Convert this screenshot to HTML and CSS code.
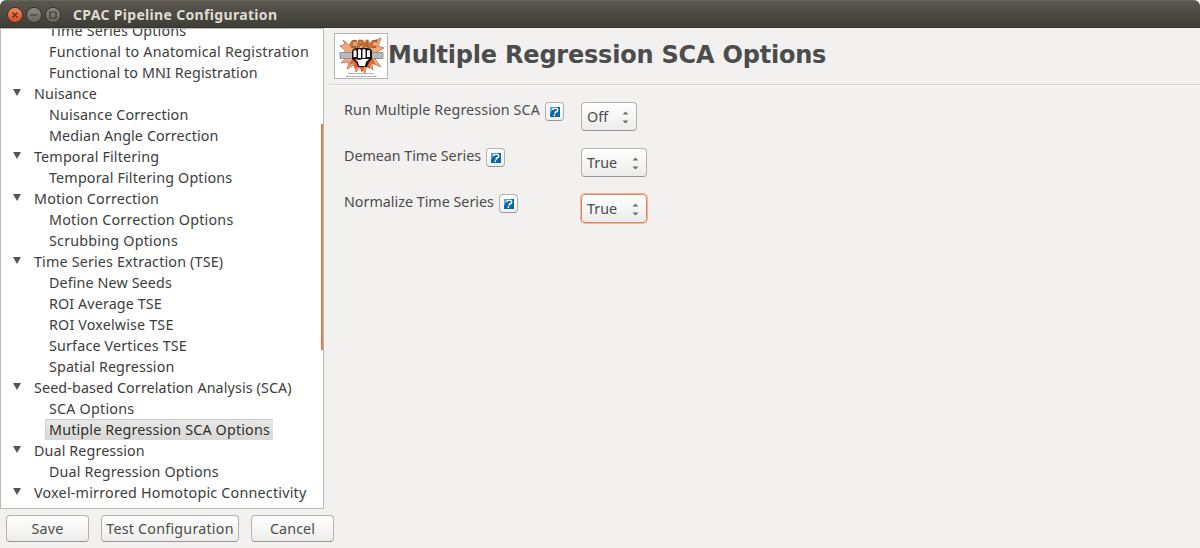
FILE: index.html
```html
<!DOCTYPE html>
<html lang="en">
<head>
<meta charset="utf-8">
<title>CPAC Pipeline Configuration</title>
<link rel="stylesheet" href="styles.css">
</head>
<body>
<div class="window">
  <header class="titlebar">
    <svg class="controls" width="54" height="18" viewBox="0 0 54 18">
      <defs>
        <linearGradient id="close" x2="0" y2="1"><stop stop-color="#f68a62"/><stop offset="1" stop-color="#dd4814"/></linearGradient>
        <linearGradient id="grey" x2="0" y2="1"><stop stop-color="#8b8982"/><stop offset="1" stop-color="#66645d"/></linearGradient>
      </defs>
      <g stroke="#34332e" stroke-width="1">
        <circle cx="8" cy="9" r="7.6" fill="url(#close)"/>
        <circle cx="27" cy="9" r="7.6" fill="url(#grey)"/>
        <circle cx="46" cy="9" r="7.6" fill="url(#grey)"/>
      </g>
      <path d="M5.500 6.500l5 5m0-5l-5 5M23.500 9h7M43 6h6v6h-6z" fill="none" stroke="#393832" stroke-width="1.200"/>
    </svg>
    <h1 class="title">CPAC Pipeline Configuration</h1>
  </header>
  <div class="body">
    <aside class="side">
      <nav class="tree">
        <ul class="list">
          <li class="leaf">Time Series Options</li>
          <li class="leaf wide">Functional to Anatomical Registration</li>
          <li class="leaf narrow">Functional to MNI Registration</li>
          <li class="group narrow">Nuisance</li>
          <li class="leaf">Nuisance Correction</li>
          <li class="leaf narrow">Median Angle Correction</li>
          <li class="group">Temporal Filtering</li>
          <li class="leaf">Temporal Filtering Options</li>
          <li class="group">Motion Correction</li>
          <li class="leaf wide">Motion Correction Options</li>
          <li class="leaf wide">Scrubbing Options</li>
          <li class="group">Time Series Extraction (TSE)</li>
          <li class="leaf narrow">Define New Seeds</li>
          <li class="leaf narrow">ROI Average TSE</li>
          <li class="leaf">ROI Voxelwise TSE</li>
          <li class="leaf">Surface Vertices TSE</li>
          <li class="leaf narrow">Spatial Regression</li>
          <li class="group narrow">Seed-based Correlation Analysis (SCA)</li>
          <li class="leaf wide">SCA Options</li>
          <li class="leaf selected">Mutiple Regression SCA Options</li>
          <li class="group narrow">Dual Regression</li>
          <li class="leaf">Dual Regression Options</li>
          <li class="group wide">Voxel-mirrored Homotopic Connectivity</li>
        </ul>
        <div class="thumb"></div>
      </nav>
      <div class="actions">
        <button class="btn save">Save</button>
        <button class="btn test">Test Configuration</button>
        <button class="btn cancel">Cancel</button>
      </div>
    </aside>
    <main class="page">
      <div class="heading">
        <svg class="logo" width="54" height="46" viewBox="0 0 54 46">
          <rect x=".5" y=".5" width="53" height="45" fill="#fff" stroke="#b4b4bc"/>
          <path d="M9 7l6 5 3-2 20 0 4-3 5-2-3 8 6 2-7 4 4 6-6 1 6 8-9-4 1 7-6-5-2 8-4-7-5 6-2-7-7 4 2-7-8 1 5-5-6-3 6-4-6-5 5-2z" fill="#f3a77c" stroke="#9c5431" stroke-width=".6"/>
          <path d="M19 25l-4 7 5-2 1 6 4-3 3 7 3-7 5 3 1-6 5 2-4-7z" fill="#e2602a"/>
          <path d="M6 19.500h13v6H6zM37 19.500h12v6H37z" fill="#b9b9bd" stroke="#85858a" stroke-width=".8"/>
          <path d="M18 18q1-3 5-3h10q4 0 5 3v8l-3 3-2 5h-9l-2-5-4-3z" fill="#191514"/>
          <path d="M19.500 18q1.500-2 3 0v6h-3zM24 17q1.500-2 3 0v8h-3zM28.500 17q1.500-2 3 0v8h-3zM33 18q1.500-2 3 0v6h-3zM21 26l4 1 4-1 6 0-3 3-1 4h-6l-1-4z" fill="#fff"/>
          <text class="logo-name" x="16" y="15" textLength="27" lengthAdjust="spacingAndGlyphs">CPAC</text>
          <path d="M14 40.500h26M12 43.500h31" stroke="#a3a0a5" stroke-width="1" stroke-dasharray="2 .5 3 .6"/>
        </svg>
        <h2 class="heading-text">Multiple Regression SCA Options</h2>
      </div>
      <div class="options">
        <div class="option">
          <label class="label run">Run Multiple Regression SCA</label>
          <button class="help"><svg width="10" height="10" viewBox="0 0 10 10"><path d="M0 0h10v10H0z" fill="#0868ac"/><path d="M0 0h4L0 7z" fill="#5fa6d4"/><path d="M2.500 3Q3 1.300 5.500 1.300T7.600 3.500Q7.300 4.800 5.600 5L4.900 6.600M4.500 7.400l-.3 1.600" fill="none" stroke="#fff" stroke-width="1.500"/></svg></button>
          <div class="choice off">Off<svg class="arrows" width="7" height="13" viewBox="0 0 7 13"><path d="M.5 3.500L3.500 .5l3 3zM.5 9.500h6l-3 3z" fill="#6c6c6c"/></svg></div>
        </div>
        <div class="option">
          <label class="label demean">Demean Time Series</label>
          <button class="help"><svg width="10" height="10" viewBox="0 0 10 10"><path d="M0 0h10v10H0z" fill="#0868ac"/><path d="M0 0h4L0 7z" fill="#5fa6d4"/><path d="M2.500 3Q3 1.300 5.500 1.300T7.600 3.500Q7.300 4.800 5.600 5L4.900 6.600M4.500 7.400l-.3 1.600" fill="none" stroke="#fff" stroke-width="1.500"/></svg></button>
          <div class="choice">True<svg class="arrows" width="7" height="13" viewBox="0 0 7 13"><path d="M.5 3.500L3.500 .5l3 3zM.5 9.500h6l-3 3z" fill="#6c6c6c"/></svg></div>
        </div>
        <div class="option">
          <label class="label normalize">Normalize Time Series</label>
          <button class="help"><svg width="10" height="10" viewBox="0 0 10 10"><path d="M0 0h10v10H0z" fill="#0868ac"/><path d="M0 0h4L0 7z" fill="#5fa6d4"/><path d="M2.500 3Q3 1.300 5.500 1.300T7.600 3.500Q7.300 4.800 5.600 5L4.900 6.600M4.500 7.400l-.3 1.600" fill="none" stroke="#fff" stroke-width="1.500"/></svg></button>
          <div class="choice focused">True<svg class="arrows" width="7" height="13" viewBox="0 0 7 13"><path d="M.5 3.500L3.500 .5l3 3zM.5 9.500h6l-3 3z" fill="#6c6c6c"/></svg></div>
        </div>
      </div>
    </main>
  </div>
</div>
</body>
</html>
```
FILE: styles.css
```css
* { box-sizing: border-box; }
body { margin: 0; background: #fff; color: #3c3c3c; font: 14.3px/21px "Noto Sans", sans-serif; }
.window { width: 1200px; height: 548px; display: flex; flex-direction: column; background: #f2f1f0; overflow: hidden; border-radius: 6px 6px 0 0; }
.titlebar { height: 28px; flex: none; display: flex; align-items: center; gap: 12px; padding: 1px 7px 0; background: linear-gradient(#5a574f, #3e3d38); border-top: 1px solid #68655c; border-bottom: 1px solid #35342f; }
.title { margin: 0; font-size: 14px; line-height: 20px; font-weight: 700; letter-spacing: .33px; color: #dfdbd2; }
.body { flex: 1; display: flex; min-height: 0; }
.side { width: 324px; flex: none; display: flex; flex-direction: column; }
.tree { height: 481px; flex: none; position: relative; overflow: hidden; background: #fff; border: 1px solid #bbb7b2; }
.list { margin: -9px 0 0; padding: 0; list-style: none; letter-spacing: .17px; }
.leaf { width: max-content; height: 21px; margin-left: 44px; padding: 0 4px; white-space: nowrap; }
.group { display: flex; height: 21px; padding-left: 33px; white-space: nowrap; }
.group::before { content: ""; width: 8px; height: 7px; margin: 6px 13px 0 -21px; background: #555; clip-path: polygon(0 0, 100% 0, 50% 100%); }
.narrow { letter-spacing: .12px; }
.wide { letter-spacing: .22px; }
.selected { width: 228px; background: linear-gradient(#e8e8e7, #d9d8d6); box-shadow: inset 0 1px #cfcfcc, inset 1px 0 #d2d1cf; color: #2f2f2f; }
.thumb { position: absolute; top: 95px; right: -1px; width: 3px; height: 226px; background: #f07746; }
.actions { display: flex; padding: 6px 0 0 6px; }
.btn { flex: none; height: 27px; padding: 0; border: 1px solid #b5b2ae; border-bottom-color: #989592; border-radius: 4px; background: linear-gradient(#fff, #ededec); color: #4c4c4c; font: inherit; white-space: nowrap; }
.save { width: 83px; letter-spacing: .2px; }
.test { width: 138px; margin: 0 12px; letter-spacing: .22px; }
.cancel { width: 83px; letter-spacing: .1px; }
.page { flex: 1; padding-left: 5px; }
.heading { height: 57px; display: flex; padding: 5px 0 0 5px; border-bottom: 1px solid #d5d2cf; box-shadow: 0 1px #fbfbfa; }
.logo { flex: none; }
.logo-name { font: italic 700 11px "DejaVu Sans", sans-serif; fill: #ec7a2c; stroke: #6b3218; stroke-width: .5px; }
.heading-text { margin: 0; font: 700 24px/44px "DejaVu Sans", sans-serif; letter-spacing: -.21px; color: #4c4c4c; }
.options { padding: 17px 0 0 15px; }
.option { height: 46px; display: flex; align-items: flex-start; color: #4c4c4c; }
.label { line-height: 15px; white-space: nowrap; }
.run { width: 201px; letter-spacing: .11px; }
.demean { width: 142px; letter-spacing: -.04px; }
.normalize { width: 155px; }
.help { width: 19px; height: 19px; flex: none; display: grid; place-items: center; padding: 0; border: 1px solid #b5b2ae; border-bottom-color: #989592; border-radius: 4px; background: linear-gradient(#fff, #f1f1f0); }
.choice { width: 66px; height: 29px; display: flex; align-items: center; justify-content: space-between; padding: 0 7px 0 5px; border: 1px solid #b5b2ae; border-bottom-color: #989592; border-radius: 4px; background: linear-gradient(#fff, #ececeb); }
.run ~ .choice { margin-left: 17px; }
.demean ~ .choice { margin-left: 76px; }
.normalize ~ .choice { margin-left: 63px; }
.off { width: 56px; }
.focused { border-color: #e98258; box-shadow: 0 0 0 1px #f3b49b; }
.arrows { margin-top: 2px; }
```
